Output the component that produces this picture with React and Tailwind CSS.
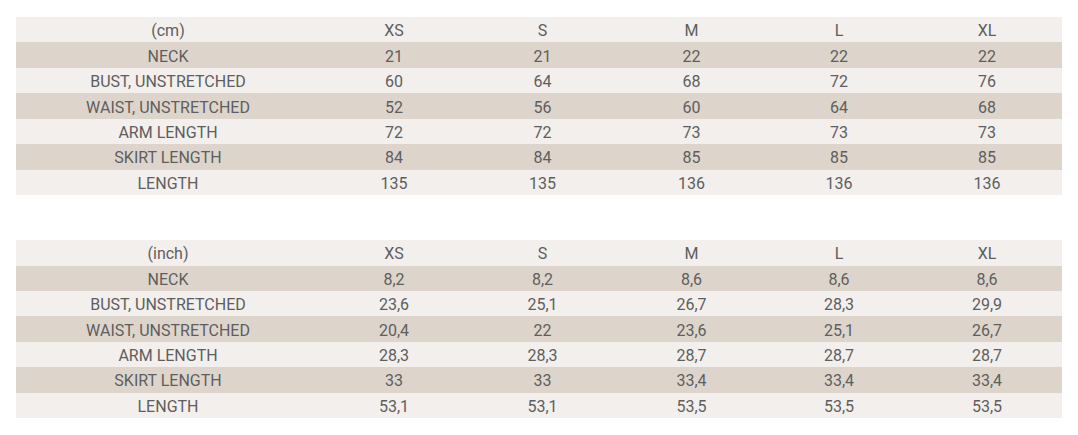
import React from "react";

const sizes = ["XS", "S", "M", "L", "XL"];

const cm = [
  ["NECK", "21", "21", "22", "22", "22"],
  ["BUST, UNSTRETCHED", "60", "64", "68", "72", "76"],
  ["WAIST, UNSTRETCHED", "52", "56", "60", "64", "68"],
  ["ARM LENGTH", "72", "72", "73", "73", "73"],
  ["SKIRT LENGTH", "84", "84", "85", "85", "85"],
  ["LENGTH", "135", "135", "136", "136", "136"],
];

const inch = [
  ["NECK", "8,2", "8,2", "8,6", "8,6", "8,6"],
  ["BUST, UNSTRETCHED", "23,6", "25,1", "26,7", "28,3", "29,9"],
  ["WAIST, UNSTRETCHED", "20,4", "22", "23,6", "25,1", "26,7"],
  ["ARM LENGTH", "28,3", "28,3", "28,7", "28,7", "28,7"],
  ["SKIRT LENGTH", "33", "33", "33,4", "33,4", "33,4"],
  ["LENGTH", "53,1", "53,1", "53,5", "53,5", "53,5"],
];

function Row({ cells, dark }) {
  return (
    <div
      className={`grid grid-cols-[304px_148px_149px_149px_146px_150px] h-[25.45px] items-center pt-[3px] ${
        dark ? "bg-[#ddd5cc]" : "bg-[#f2efec]"
      }`}
    >
      {cells.map((c, i) => (
        <div key={i} className="text-center leading-none">
          {c}
        </div>
      ))}
    </div>
  );
}

function Table({ unit, rows }) {
  return (
    <div className="w-[1046px]">
      <Row cells={[unit, ...sizes]} dark={false} />
      {rows.map((r, i) => (
        <Row key={i} cells={r} dark={i % 2 === 0} />
      ))}
    </div>
  );
}

export default function App() {
  return (
    <div
      className="bg-white w-[1078px] h-[435px] pl-[16px] pt-[17px] flex flex-col gap-[45px] text-[#5e5e5e] text-[16px]"
      style={{ fontFamily: "Roboto, 'Liberation Sans', sans-serif" }}
    >
      <Table unit="(cm)" rows={cm} />
      <Table unit="(inch)" rows={inch} />
    </div>
  );
}
